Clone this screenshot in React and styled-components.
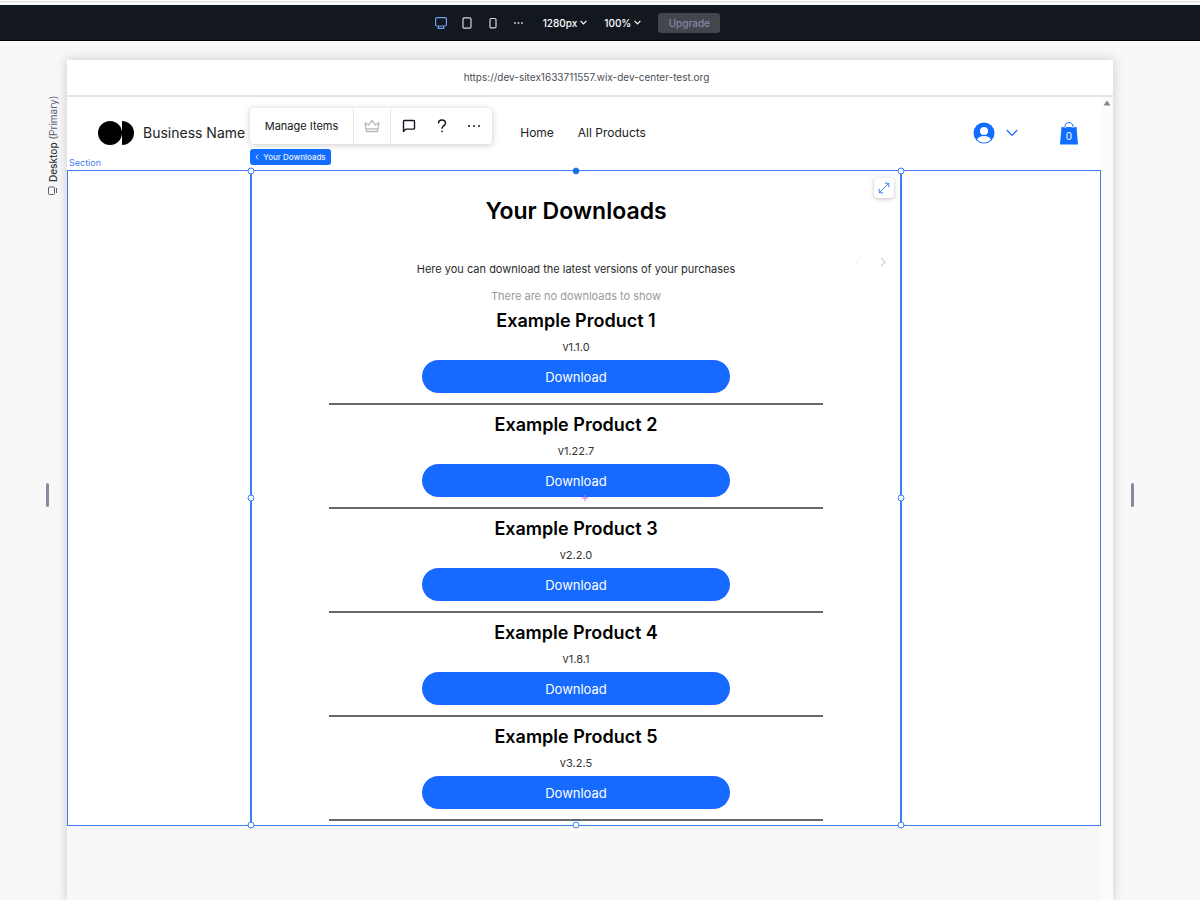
import React from "react";
import styled, { createGlobalStyle } from "styled-components";

const BLUE = "#116dff";
const LINE = "#3b7ff5";

const Global = createGlobalStyle`
  *, *::before, *::after { box-sizing: border-box; }
  body { margin: 0; background: #f8f8f8; color: #000; font-family: Inter, "Liberation Sans", sans-serif; }
  button { font: inherit; color: inherit; background: none; border: 0; padding: 0; cursor: pointer; }
  a { color: inherit; text-decoration: none; }
  h1, h2, p { margin: 0; }
  svg { display: block; flex: none; }
`;

const Page = styled.div`
  display: flex;
  flex-direction: column;
  height: 100vh;
  overflow: hidden;
`;

const WindowEdge = styled.div`
  height: 5px;
  flex: none;
  background: #fafafa;
  border-top: 1px solid #fff;
  box-shadow: inset 0 1px 0 #dadada;
`;

const TopBar = styled.header`
  height: 36px;
  flex: none;
  display: flex;
  align-items: center;
  justify-content: center;
  background: #131720;
  border-bottom: 1px solid #000;
  padding-right: 46px;
  font-size: 10px;
  font-weight: 500;
  color: #fff;
`;

const DeviceButtons = styled.div`
  display: flex;
  align-items: center;
  gap: 12px;
  margin-right: 17px;
`;

const DeviceButton = styled.button`
  width: 14px;
  height: 16px;
  display: grid;
  place-items: center;
  color: ${(p) => (p.$active ? "#6f9bea" : "#d4d6da")};
`;

const MenuButton = styled.button`
  display: flex;
  align-items: center;
  gap: 3px;
  margin-right: 17px;
  white-space: nowrap;
`;

const UpgradeButton = styled.button`
  width: 62px;
  height: 20px;
  border-radius: 3px;
  background: #43464d;
  color: #8587a5;
`;

const Workspace = styled.div`
  flex: 1;
  display: flex;
  min-height: 0;
`;

const Gutter = styled.div`
  flex: none;
  width: ${(p) => p.$width}px;
  padding: 56px 0 0 ${(p) => p.$inset}px;
`;

const Breakpoint = styled.div`
  height: 98px;
  width: 14px;
  display: flex;
  align-items: center;
  gap: 4px;
  writing-mode: vertical-rl;
  transform: rotate(180deg);
  font-size: 10px;
  line-height: 14px;
  white-space: nowrap;
  color: #595d70;

  b { font-weight: 500; color: #33363f; }
`;

const Grip = styled.button`
  display: block;
  width: 3px;
  height: 24px;
  margin-top: ${(p) => p.$gap}px;
  border-radius: 2px;
  background: #868aa5;
`;

const Stage = styled.main`
  flex: 1;
  min-width: 0;
  margin-top: 19px;
  display: flex;
  flex-direction: column;
  box-shadow: 0 0 10px 1px rgba(55, 55, 95, 0.2);
`;

const AddressBar = styled.div`
  height: 37px;
  flex: none;
  display: flex;
  align-items: center;
  justify-content: center;
  padding: 0 7px 2px 0;
  background: #fff;
  border-bottom: 2px solid #e4e4e6;
  font-size: 10px;
  color: #4c4e54;
`;

const Viewport = styled.div`
  flex: 1;
  min-height: 0;
  display: flex;
`;

const Site = styled.div`
  flex: 1;
  min-width: 0;
  background: #f8f8f8;
`;

const ScrollTrack = styled.div`
  width: 12px;
  flex: none;
  display: flex;
  justify-content: center;
  padding-top: 2px;
  background: #fcfcfc;
  color: #858585;
`;

const SiteHeader = styled.div`
  height: 73px;
  display: flex;
  align-items: center;
  padding: 0 23px 2px 31px;
  background: #fff;
  white-space: nowrap;
`;

const Brand = styled.a`
  display: flex;
  align-items: center;
  gap: 9px;
  font-size: 14px;
  color: #222;
`;

const SiteNav = styled.nav`
  display: flex;
  gap: 24px;
  margin-left: 275px;
  font-size: 12px;
  color: #222;
`;

const Account = styled.div`
  display: flex;
  align-items: center;
  margin-left: auto;
  color: ${BLUE};
`;

const AccountButton = styled.button`
  display: flex;
  align-items: center;
  gap: 11px;
  margin-right: 42px;
`;

const CartButton = styled.button`
  position: relative;
`;

const CartCount = styled.span`
  position: absolute;
  inset: 9px 0 auto;
  text-align: center;
  font-size: 10px;
  line-height: 12px;
  color: #fff;
`;

const Section = styled.section`
  position: relative;
  display: grid;
  grid-template-columns: 182fr minmax(500px, 652fr) 198fr;
  height: 656px;
  background: #fff;
  border: 1px solid ${LINE};
`;

const SectionLabel = styled.span`
  position: absolute;
  left: 1px;
  top: -15px;
  font-size: 9px;
  line-height: 14px;
  color: ${LINE};
`;

const Widget = styled.div`
  position: relative;
  grid-column: 2;
  margin: -1px 0;
  border: solid ${LINE};
  border-width: 1px 2px;
  padding: 24px 77px 0;
  text-align: center;
`;

const Title = styled.h1`
  font-size: 23px;
  line-height: 32px;
  font-weight: 600;
`;

const Lead = styled.p`
  margin-top: 32px;
  font-size: 11px;
  line-height: 20px;
  color: #2b2b2b;
  white-space: nowrap;
`;

const Empty = styled.p`
  margin-top: 7px;
  font-size: 11px;
  line-height: 20px;
  color: #999;
`;

const Product = styled.article`
  height: 104px;
  padding-top: 2px;
  border-bottom: 2px solid #686868;

  & + & { padding-top: 7px; }
  &:first-of-type { height: 99px; }
`;

const ProductName = styled.h2`
  font-size: 18px;
  line-height: 26px;
  font-weight: 600;
`;

const Version = styled.p`
  font-size: 11px;
  line-height: 26px;
  color: #333;
`;

const DownloadButton = styled.button`
  display: block;
  width: 308px;
  height: 33px;
  margin: 0 auto;
  border-radius: 17px;
  background: #166aff;
  color: #fff;
  font-size: 13px;
`;

const Handle = styled.i`
  position: absolute;
  left: ${(p) => p.$x};
  top: ${(p) => p.$y};
  width: 7px;
  height: 7px;
  border-radius: 50%;
  border: 1px solid ${LINE};
  background: ${(p) => (p.$solid ? BLUE : "#fff")};
  transform: translate(-50%, -50%);
`;

const Toolbar = styled.div`
  position: absolute;
  left: -2px;
  top: -63px;
  height: 36px;
  display: flex;
  border-radius: 4px;
  background: #fff;
  box-shadow: 0 1px 6px rgba(0, 0, 0, 0.22);
  font-size: 11px;
`;

const ToolButton = styled.button`
  width: ${(p) => p.$width}px;
  display: grid;
  place-items: center;
  white-space: nowrap;
  border-left: ${(p) => (p.$split ? "1px solid #e8e8e8" : "0")};
  color: ${(p) => (p.$muted ? "#b8b8b8" : "#131720")};
`;

const Tag = styled.button`
  position: absolute;
  left: -2px;
  top: -22px;
  width: 81px;
  height: 16px;
  display: flex;
  align-items: center;
  justify-content: center;
  gap: 4px;
  border-radius: 3px;
  background: ${BLUE};
  color: #e4eeff;
  font-size: 8px;
  font-weight: 500;
  white-space: nowrap;
`;

const StretchButton = styled.button`
  position: absolute;
  right: 6px;
  top: 7px;
  width: 20px;
  height: 20px;
  display: grid;
  place-items: center;
  border-radius: 4px;
  background: #fff;
  box-shadow: 0 1px 4px rgba(0, 0, 0, 0.25);
  color: ${LINE};
`;

const Pager = styled.div`
  position: absolute;
  right: 14px;
  top: 86px;
  display: flex;
  gap: 19px;
`;

const PagerButton = styled.button`
  color: ${(p) => (p.$dim ? "#f0f0f0" : "#d0d0d0")};
`;

const CenterMark = styled.span`
  position: absolute;
  left: calc(50% + 9px);
  top: 50%;
  transform: translate(-50%, -50%);
  color: #d66cff;
`;

const Icon = ({ w, h, sw = 1, children }) => (
  <svg width={w} height={h} viewBox={`0 0 ${w} ${h}`} fill="none" stroke="currentColor" strokeWidth={sw} aria-hidden="true">
    {children}
  </svg>
);

const Dots = ({ r, gap }) => (
  <svg width={gap * 2 + 4} height="4" viewBox={`0 0 ${gap * 2 + 4} 4`} fill="currentColor" aria-hidden="true">
    <circle cx="2" cy="2" r={r} />
    <circle cx={2 + gap} cy="2" r={r} />
    <circle cx={2 + gap * 2} cy="2" r={r} />
  </svg>
);

const Caret = () => (
  <Icon w={7} h={5} sw={1.2}><path d="M.6.8 3.5 3.8 6.4.8" /></Icon>
);

const products = [
  { name: "Example Product 1", version: "v1.1.0" },
  { name: "Example Product 2", version: "v1.22.7" },
  { name: "Example Product 3", version: "v2.2.0" },
  { name: "Example Product 4", version: "v1.8.1" },
  { name: "Example Product 5", version: "v3.2.5" },
];

const LEFT = "-1px";
const RIGHT = "calc(100% + 1px)";
const handles = [
  [LEFT, "0%"], [RIGHT, "0%"], [LEFT, "50%"], [RIGHT, "50%"],
  [LEFT, "100%"], ["50%", "100%"], [RIGHT, "100%"],
];

export default function App() {
  return (
    <Page>
      <Global />
      <WindowEdge />
      <TopBar>
        <DeviceButtons>
          <DeviceButton $active aria-label="Desktop">
            <Icon w={14} h={14} sw={1.2}>
              <rect x="1.6" y="1.6" width="10.8" height="8.4" rx="1.2" />
              <path d="M4.500 10v2M9.500 10v2M3.500 12.400h7" />
            </Icon>
          </DeviceButton>
          <DeviceButton aria-label="Tablet">
            <Icon w={10} h={12} sw={1.2}><rect x="1" y=".8" width="8" height="10.4" rx="1.2" /></Icon>
          </DeviceButton>
          <DeviceButton aria-label="Mobile">
            <Icon w={8} h={12} sw={1.2}><rect x="1" y="1.500" width="6" height="9.400" rx="1.2" /></Icon>
          </DeviceButton>
          <DeviceButton aria-label="More breakpoints"><Dots r={0.9} gap={3.5} /></DeviceButton>
        </DeviceButtons>
        <MenuButton>1280px <Caret /></MenuButton>
        <MenuButton>100% <Caret /></MenuButton>
        <UpgradeButton>Upgrade</UpgradeButton>
      </TopBar>

      <Workspace>
        <Gutter $width={67} $inset={46}>
          <Breakpoint>
            <Icon w={9} h={9}>
              <rect x="2.500" y=".5" width="6" height="7.500" rx="1" />
              <path d="M.5 2v5" />
            </Icon>
            <span><b>Desktop</b> (Primary)</span>
          </Breakpoint>
          <Grip $gap={288} aria-label="Resize left" />
        </Gutter>

        <Stage>
          <AddressBar>https://dev-sitex1633711557.wix-dev-center-test.org</AddressBar>
          <Viewport>
            <Site>
              <SiteHeader>
                <Brand href="#">
                  <svg width="36" height="24" viewBox="0 0 36 24" aria-hidden="true">
                    <circle cx="12" cy="12" r="12" />
                    <path d="M24 0a12 12 0 0 1 0 24Z" />
                  </svg>
                  Business Name
                </Brand>
                <SiteNav>
                  <a href="#">Home</a>
                  <a href="#">All Products</a>
                </SiteNav>
                <Account>
                  <AccountButton aria-label="Account">
                    <svg width="22" height="22" viewBox="0 0 22 22" aria-hidden="true">
                      <circle cx="11" cy="11" r="10.5" fill={BLUE} />
                      <circle cx="11" cy="9" r="4" fill="#fff" />
                      <path d="M4 17.5c1.7-2.6 4.200-3.500 7-3.500s5.300.9 7 3.500c-1.800 2-4.200 3.100-7 3.100s-5.200-1.100-7-3.100Z" fill="#fff" />
                    </svg>
                    <Icon w={12} h={8} sw={1.2}><path d="M.8 1 6 6.500 11.200 1" /></Icon>
                  </AccountButton>
                  <CartButton aria-label="Cart">
                    <svg width="18" height="24" viewBox="0 0 18 24" aria-hidden="true">
                      <path d="M1.500 6h15L18 23.500H0Z" fill={BLUE} />
                      <path d="M5 7V5.500C5 3 6.700 1.600 9 1.600S13 3 13 5.500V7" fill="none" stroke="#fff" strokeWidth="2.400" />
                      <path d="M5 7V5.500C5 3 6.700 1.600 9 1.600S13 3 13 5.500V7" fill="none" stroke={BLUE} strokeWidth="1" />
                    </svg>
                    <CartCount>0</CartCount>
                  </CartButton>
                </Account>
              </SiteHeader>

              <Section>
                <SectionLabel>Section</SectionLabel>
                <Widget>
                  <Title>Your Downloads</Title>
                  <Lead>Here you can download the latest versions of your purchases</Lead>
                  <Empty>There are no downloads to show</Empty>
                  {products.map((p) => (
                    <Product key={p.name}>
                      <ProductName>{p.name}</ProductName>
                      <Version>{p.version}</Version>
                      <DownloadButton>Download</DownloadButton>
                    </Product>
                  ))}

                  <Toolbar>
                    <ToolButton $width={103}>Manage Items</ToolButton>
                    <ToolButton $width={37} $split $muted aria-label="Upgrade">
                      <Icon w={16} h={14} sw={1.3}>
                        <path d="M1.200 3.800 4.600 6 8 1.500 11.400 6l3.400-2.200-1.200 8.700H2.400ZM2.200 9.800h11.600" strokeLinejoin="round" />
                      </Icon>
                    </ToolButton>
                    <ToolButton $width={37} $split aria-label="Comment">
                      <Icon w={14} h={14} sw={1.4}>
                        <path d="M1.500 12.600V2.300q0-.8.8-.8h9.400q.8 0 .8.800v7q0 .8-.8.8H4Z" strokeLinejoin="round" />
                      </Icon>
                    </ToolButton>
                    <ToolButton $width={29} aria-label="Help">
                      <Icon w={10} h={14} sw={1.4}>
                        <path d="M1.500 4.500C1.500 2.300 3 1 5 1s3.500 1.300 3.500 3.200C8.500 6.500 5 6.800 5 9.800M5 11.600v1.600" />
                      </Icon>
                    </ToolButton>
                    <ToolButton $width={36} aria-label="More actions"><Dots r={1} gap={5} /></ToolButton>
                  </Toolbar>
                  <Tag>
                    <Icon w={4} h={6}><path d="M3.200.6.9 3l2.300 2.400" /></Icon>
                    Your Downloads
                  </Tag>
                  <StretchButton aria-label="Stretch">
                    <Icon w={12} h={12}>
                      <path d="M1.500 10.500l9-9M6.800 1.200h4v4M1.200 6.800v4h4" />
                    </Icon>
                  </StretchButton>
                  <Pager>
                    <PagerButton $dim aria-label="Previous"><Icon w={6} h={10}><path d="M5 .8.8 5 5 9.200" /></Icon></PagerButton>
                    <PagerButton aria-label="Next"><Icon w={6} h={10} sw={1.200}><path d="M1 .8 5.200 5 1 9.200" /></Icon></PagerButton>
                  </Pager>
                  <CenterMark><Icon w={7} h={7}><path d="M0 3.500h7M3.500 0v7" /></Icon></CenterMark>
                  <Handle $x="50%" $y="0%" $solid />
                  {handles.map(([x, y]) => <Handle key={x + y} $x={x} $y={y} />)}
                </Widget>
              </Section>
            </Site>
            <ScrollTrack>
              <svg width="8" height="8" viewBox="0 0 8 8" aria-hidden="true"><path d="M4 1.500 7.500 6.500h-7Z" fill="currentColor" /></svg>
            </ScrollTrack>
          </Viewport>
        </Stage>

        <Gutter $width={87} $inset={18}>
          <Grip $gap={386} aria-label="Resize right" />
        </Gutter>
      </Workspace>
    </Page>
  );
}
